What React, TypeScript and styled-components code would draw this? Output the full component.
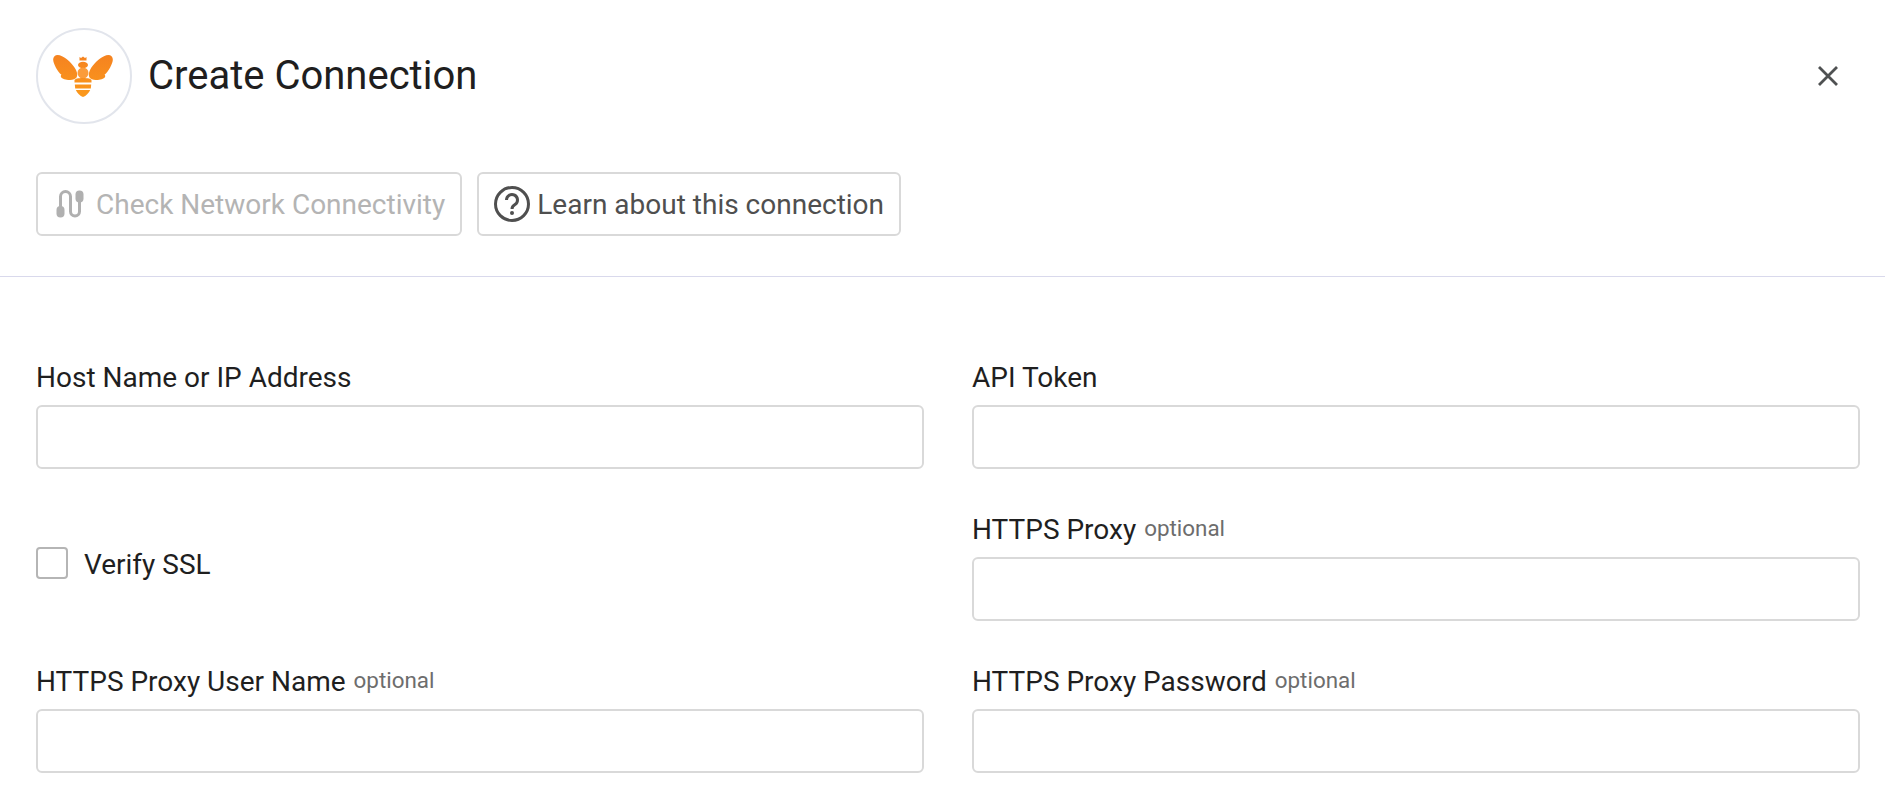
import React from "react";
import styled, { createGlobalStyle } from "styled-components";

const Global = createGlobalStyle`
  html, body { margin: 0; padding: 0; background: #fff; height: 794px; overflow: hidden; }
  body { font-family: Roboto, "Liberation Sans", sans-serif; color: #1c1b1f; }
`;

const Page = styled.div`
  width: 1885px;
  height: 794px;
  overflow: hidden;
  display: flex;
  flex-direction: column;
`;

const Header = styled.header`
  flex: none;
  display: flex;
  flex-direction: column;
  padding: 28px 41px 0 36px;
  height: 277px;
  border-bottom: 1px solid #d9d9ec;
  box-sizing: border-box;
`;

const TitleRow = styled.div`
  display: flex;
  align-items: center;
  height: 96px;
`;

const LogoCircle = styled.div`
  width: 96px;
  height: 96px;
  box-sizing: border-box;
  border: 2px solid #e2e5ec;
  border-radius: 50%;
  padding-right: 3px;
  display: flex;
  align-items: center;
  justify-content: center;
  flex: none;
`;

const Title = styled.h1`
  margin: 0 0 0 16px;
  font-size: 40px;
  font-weight: 400;
  line-height: 48px;
  color: #201e1e;
  flex: 1;
`;

const CloseButton = styled.button`
  border: 0;
  background: none;
  padding: 0;
  width: 32px;
  height: 32px;
  display: flex;
  align-items: center;
  justify-content: center;
`;

const Actions = styled.div`
  display: flex;
  gap: 15px;
  margin-top: 48px;
`;

const ActionButton = styled.button<{ $disabled?: boolean }>`
  height: 64px;
  box-sizing: border-box;
  display: flex;
  align-items: center;
  gap: 7px;
  padding: 0 15px;
  border: 2px solid #d9d9d9;
  border-radius: 6px;
  background: #fff;
  font-family: inherit;
  font-size: 28px;
  font-weight: 400;
  color: ${(p) => (p.$disabled ? "#b4b4b4" : "#4f4f4f")};
`;

const Form = styled.div`
  display: grid;
  grid-template-columns: 888px 888px;
  column-gap: 48px;
  grid-auto-rows: 152px;
  padding: 40px 0 0 36px;
`;

const Field = styled.div`
  display: flex;
  flex-direction: column;
  justify-content: flex-end;
  height: 152px;
  box-sizing: border-box;
`;

const LabelRow = styled.div`
  display: flex;
  align-items: flex-start;
  gap: 8px;
  height: 33px;
  margin-bottom: 11px;
`;

const Label = styled.label`
  font-size: 28px;
  line-height: 33px;
  color: #1f1f1f;
`;

const Optional = styled.span`
  font-size: 22.4px;
  line-height: 30px;
  color: #6d6d6d;
`;

const Input = styled.input`
  display: block;
  width: 100%;
  height: 64px;
  box-sizing: border-box;
  border: 2px solid #d9d9d9;
  border-radius: 6px;
  background: #fff;
  outline: none;
`;

const CheckField = styled.div`
  display: flex;
  align-items: center;
  height: 152px;
  padding-top: 38px;
  box-sizing: border-box;
  gap: 16px;
`;

const Box = styled.input.attrs({ type: "checkbox" })`
  appearance: none;
  width: 32px;
  height: 32px;
  margin: 0 0 2px;
  box-sizing: border-box;
  border: 2px solid #b5b5b5;
  border-radius: 4px;
  background: #fff;
`;

const WING =
  "M1.500 2.200C3 .7 6 .8 9 2.200 14 4.500 20 10 23 16c1.500 3 1.500 6 .5 7.500-1.200 1.700-4 2.700-7 2.500-3.500-.2-7.500-1-8.500-3-.5-1 0-2 .5-2.200C4.500 17.500 .5 10 .2 6c-.1-1.500.4-2.800 1.300-3.800Z";

const Bee = () => (
  <svg width="60" height="44" viewBox="0 0 60 44">
    <defs>
      <linearGradient id="bee" gradientUnits="userSpaceOnUse" x1="0" y1="0" x2="0" y2="44">
        <stop offset="0" stopColor="#f58220" />
        <stop offset="1" stopColor="#fb9a1c" />
      </linearGradient>
    </defs>
    <g fill="url(#bee)">
      <path d={WING} />
      <path d={WING} transform="matrix(-1 0 0 1 60 0)" />
      <path d="M26.500 3l1.500 1L30 2.500 32 4l1.500-1v3.500h-7Z" />
      <ellipse cx="30" cy="11" rx="5" ry="3.200" />
      <circle cx="30" cy="19" r="5.500" fill="#fb9c3a" />
      <path d="M21.500 26c1-1.200 3-2 8.500-2s7.500.8 8.500 2v2.500h-17Z" />
      <path d="M21.800 30.500h16.400l-.4 4H22.200Z" />
      <path d="M22.800 36h14.400c-1.400 3-4.200 6-7.200 7-3-1-5.800-4-7.200-7Z" />
    </g>
  </svg>
);

const CloseIcon = () => (
  <svg width="22" height="22" viewBox="0 0 22 22" fill="none" stroke="#4f5152" strokeWidth="2.800">
    <path d="M2 2l18 18M20 2L2 20" />
  </svg>
);

const CableIcon = () => (
  <svg width="36" height="30" viewBox="0 0 36 30" fill="none" stroke="#b0b0b0">
    <path d="M7.500 18V7.500a5 5 0 0 1 10 0V22.500a4.500 4.500 0 0 0 9 0V12" strokeWidth="3" />
    <rect x="3.500" y="17" width="8" height="11.500" rx="4" fill="#b0b0b0" stroke="none" />
    <rect x="22.500" y="1.500" width="8" height="12" rx="4" fill="#b0b0b0" stroke="none" />
  </svg>
);

const HelpIcon = () => (
  <svg width="36" height="36" viewBox="0 0 36 36" fill="none">
    <circle cx="18" cy="18" r="16.500" stroke="#4f4f4f" strokeWidth="3" />
    <path d="M12.500 14a5.500 5.500 0 1 1 8.500 4.600c-2 1.300-3 2.200-3 4.400" stroke="#4f4f4f" strokeWidth="3" />
    <circle cx="18" cy="27" r="2" fill="#4f4f4f" />
  </svg>
);

export default function App() {
  return (
    <Page>
      <Global />
      <Header>
        <TitleRow>
          <LogoCircle><Bee /></LogoCircle>
          <Title>Create Connection</Title>
          <CloseButton aria-label="Close"><CloseIcon /></CloseButton>
        </TitleRow>
        <Actions>
          <ActionButton $disabled><CableIcon />Check Network Connectivity</ActionButton>
          <ActionButton><HelpIcon />Learn about this connection</ActionButton>
        </Actions>
      </Header>
      <Form>
        <Field>
          <LabelRow><Label>Host Name or IP Address</Label></LabelRow>
          <Input />
        </Field>
        <Field>
          <LabelRow><Label>API Token</Label></LabelRow>
          <Input />
        </Field>
        <CheckField>
          <Box />
          <Label>Verify SSL</Label>
        </CheckField>
        <Field>
          <LabelRow><Label>HTTPS Proxy</Label><Optional>optional</Optional></LabelRow>
          <Input />
        </Field>
        <Field>
          <LabelRow><Label>HTTPS Proxy User Name</Label><Optional>optional</Optional></LabelRow>
          <Input />
        </Field>
        <Field>
          <LabelRow><Label>HTTPS Proxy Password</Label><Optional>optional</Optional></LabelRow>
          <Input />
        </Field>
      </Form>
    </Page>
  );
}
